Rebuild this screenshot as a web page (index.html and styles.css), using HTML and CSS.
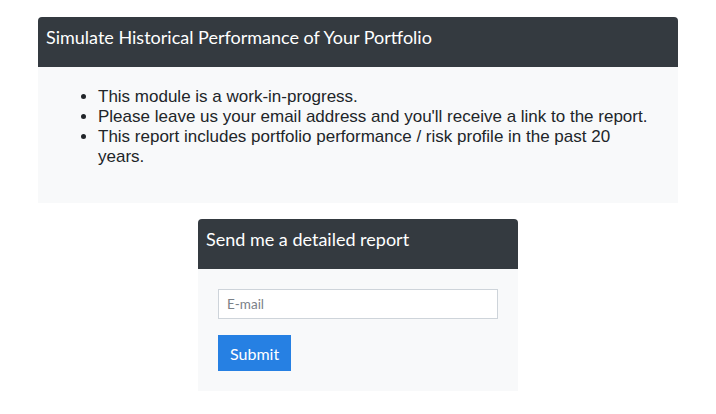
FILE: index.html
```html
<!DOCTYPE html>
<html>
<head>
<meta charset="utf-8">
<link rel="stylesheet" href="styles.css">
</head>
<body>
<div class="page">
  <section class="card card-wide">
    <div class="card-header">Simulate Historical Performance of Your Portfolio</div>
    <div class="card-body">
      <ul class="notes">
        <li>This module is a work-in-progress.</li>
        <li>Please leave us your email address and you'll receive a link to the report.</li>
        <li>This report includes portfolio performance / risk profile in the past 20 years.</li>
      </ul>
    </div>
  </section>
  <section class="card card-narrow">
    <div class="card-header">Send me a detailed report</div>
    <div class="card-body form-body">
      <input class="email" type="text" placeholder="E-mail">
      <button class="submit" type="button">Submit</button>
    </div>
  </section>
</div>
</body>
</html>
```
FILE: styles.css
```css
html, body {
  margin: 0;
  padding: 0;
  background: #ffffff;
}
.page {
  display: flex;
  flex-direction: column;
  align-items: center;
  padding-top: 17px;
  gap: 16px;
}
.card {
  display: flex;
  flex-direction: column;
}
.card-wide { width: 640px; }
.card-narrow { width: 320px; }
.card-header {
  height: 50px;
  box-sizing: border-box;
  background: #343a40;
  color: #ffffff;
  border-radius: 4px 4px 0 0;
  font-family: "Lato", sans-serif;
  font-size: 18px;
  line-height: 24px;
  padding: 8px 8px 0 8px;
}
.card-body {
  background: #f8f9fa;
  padding: 20px;
}
.notes {
  margin: 0 0 16px 0;
  padding-left: 40px;
  font-family: "Liberation Sans", Arial, sans-serif;
  font-size: 17px;
  line-height: 20px;
  color: #212529;
}
.form-body {
  display: flex;
  flex-direction: column;
  align-items: flex-start;
  gap: 16px;
}
.email {
  width: 280px;
  height: 30px;
  box-sizing: border-box;
  border: 1px solid #ced4da;
  background: #ffffff;
  padding: 0 8px;
  font-family: "Lato", sans-serif;
  font-size: 13.5px;
  color: #495057;
  margin: 0;
  outline: none;
}
.email::placeholder { color: #7b8188; }
.submit {
  height: 36px;
  padding: 0 12px;
  border: none;
  background: #2680e3;
  color: #ffffff;
  font-family: "Lato", sans-serif;
  font-size: 16px;
  margin: 0;
}
```
